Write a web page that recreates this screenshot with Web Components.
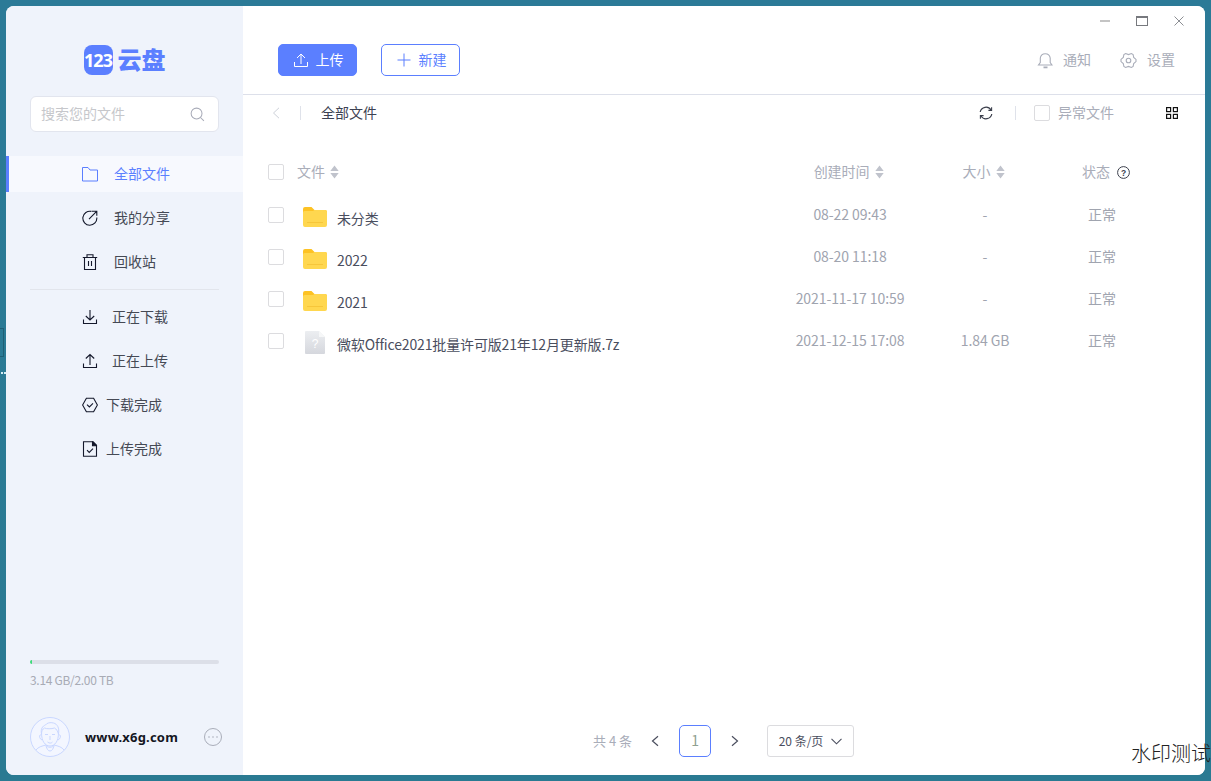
<!DOCTYPE html>
<html lang="zh">
<head>
<meta charset="utf-8">
<title>123云盘</title>
<style>
    html, body { margin: 0; height: 100%; }
    body {
        background: linear-gradient(180deg, #2b7a97, #2a7a92);
        font-family: "Noto Sans CJK SC", "Noto Sans", sans-serif;
        overflow: hidden;
    }
</style>
</head>
<body>
<app-window>
    <side-bar slot="side"></side-bar>
    <file-pane slot="main"></file-pane>
</app-window>

<script>
const icons = {
    folder: `<svg width="16" height="16" viewBox="0 0 16 16" fill="none" stroke="currentColor"><path d="M.5 1.500h5.500l2 2.500h7.500v11H.5z"/></svg>`,
    share: `<svg width="16" height="16" viewBox="0 0 16 16" fill="none" stroke="currentColor" stroke-width="1.100"><path d="M9.500 1.400A7 7 0 1 0 14.800 7.500"/><path d="M7 9.200 14.600 1.400M10 1.200h4.800v4.600"/></svg>`,
    trash: `<svg width="16" height="16" viewBox="0 0 16 16" fill="none" stroke="currentColor" stroke-width="1.100"><path d="M.8 3.500h14.400M2.500 3.500v12h11v-12M5 3.500V.8h6v2.700M6.500 7v5M9.500 7v5"/></svg>`,
    download: `<svg width="16" height="16" viewBox="0 0 16 16" fill="none" stroke="currentColor" stroke-width="1.100"><path d="M1.500 10.500v4h13v-4M8 1v10M3.800 7 8 11l4.200-4"/></svg>`,
    upload: `<svg width="16" height="16" viewBox="0 0 16 16" fill="none" stroke="currentColor" stroke-width="1.100"><path d="M1.500 10.500v4h13v-4M8 12V1.500M3.800 5.500 8 1.500l4.200 4"/></svg>`,
    hexcheck: `<svg width="16" height="16" viewBox="0 0 16 16" fill="none" stroke="currentColor" stroke-width="1.100"><path d="M4.400 1.200h7.200L15.400 8l-3.800 6.800H4.400L.6 8z"/><path d="M5 7.600 7.400 10 11 6.400"/></svg>`,
    filecheck: `<svg width="16" height="16" viewBox="0 0 16 16" fill="none" stroke="currentColor" stroke-width="1.100"><path d="M1.500.8h9l4 4v10.400h-13z"/><path d="M10.500.8h.6l3.400 3.400v.6h-4z" fill="currentColor"/><path d="M5 9.200 7.200 11.400 11 7.600"/></svg>`,
    search: `<svg width="15" height="15" viewBox="0 0 16 16" fill="none" stroke="#a8abb8" stroke-width="1.100"><circle cx="7" cy="7" r="5.800"/><path d="m11.200 11.200 3.600 3.600"/></svg>`,
    sort: `<svg width="9" height="14" viewBox="0 0 9 14" fill="#c0c3cc"><path d="M4.500.5 8.700 6H.3zM.3 8h8.400l-4.200 5.500z"/></svg>`,
    bell: `<svg width="16" height="18" viewBox="0 0 16 18" fill="none" stroke="#a9adb9" stroke-width="1.100"><path d="M1.500 14h13.500l-1.800-2.400V7A5 5 0 0 0 3.300 7v4.600z"/><path d="M6.500 16.400h4" stroke-width="1.600"/></svg>`,
    gear: `<svg width="17" height="17" viewBox="0 0 17 17" fill="none" stroke="#a9adb9" stroke-width="1.100"><path d="M5.600 1.600 8.500 2.600l2.900-1 1.700.9.600 2.900 2.300 2v2.200l-2.300 2-.6 2.900-1.700.9-2.900-1-2.900 1-1.700-.9-.6-2.900-2.300-2V7.400l2.300-2 .6-2.900z"/><circle cx="8.500" cy="8.500" r="2.300"/></svg>`,
    refresh: `<svg width="14" height="14" viewBox="0 0 14 14" fill="none" stroke="#3b3f4c" stroke-width="1.200"><path d="M1.200 6A5.900 5.900 0 0 1 12 4M12.800 8A5.900 5.900 0 0 1 2 10"/><path d="M12.600 1.200V4.400H9.400M1.400 12.800V9.600h3.200" stroke-width="1.100"/></svg>`,
    grid: `<svg width="12" height="12" viewBox="0 0 12 12" fill="none" stroke="#111" stroke-width="1.200"><rect x=".6" y=".6" width="4" height="4"/><rect x="7.400" y=".6" width="4" height="4"/><rect x=".6" y="7.400" width="4" height="4"/><rect x="7.400" y="7.400" width="4" height="4"/></svg>`,
    help: `<svg width="13" height="13" viewBox="0 0 13 13" fill="none" stroke="#3b3f4c"><circle cx="6.500" cy="6.500" r="5.900"/><text x="6.500" y="9.500" text-anchor="middle" font-size="8.500" font-weight="700" fill="#3b3f4c" stroke="none" font-family="Liberation Sans">?</text></svg>`,
    bigfolder: `<svg width="24" height="20" viewBox="0 0 24 20"><path d="M0 2a2 2 0 0 1 2-2h6.500l3 3H22a2 2 0 0 1 2 2v5H0z" fill="#fdc224"/><path d="M0 5.500a1.500 1.500 0 0 1 1.500-1.500H10l1.500-1H22a2 2 0 0 1 2 2v13a2 2 0 0 1-2 2H2a2 2 0 0 1-2-2z" fill="#ffd74f"/><path d="M4 15.500h16" stroke="#f6c63a"/></svg>`,
    bigfile: `<svg width="20" height="23" viewBox="0 0 20 23"><defs><linearGradient id="g" x1="0" y1="0" x2="0" y2="1"><stop offset="0" stop-color="#eceef1"/><stop offset="1" stop-color="#d5d7dd"/></linearGradient></defs><path d="M1 0h13l6 6v16a1 1 0 0 1-1 1H1a1 1 0 0 1-1-1V1a1 1 0 0 1 1-1z" fill="url(#g)"/><path d="M14 0l6 6h-6z" fill="#f6f7f8"/><text x="10" y="17" text-anchor="middle" font-size="12" fill="#fff" font-family="Liberation Sans">?</text></svg>`
}

class appWindow extends HTMLElement {
    constructor() {
        super()
        this.attachShadow({ mode: "open" });
    }

    connectedCallback() {
        this.shadowRoot.innerHTML = /*html*/`
        <style>
            :host {
                display: block;
                height: 100vh;
                box-sizing: border-box;
                padding: 6px;
                position: relative;
            }
            .window {
                display: flex;
                height: 100%;
                border-radius: 8px;
                overflow: hidden;
                background: white;
            }
            .ghost {
                position: absolute;
                left: 0;
                top: 328px;
                width: 3px;
                height: 27px;
                border: 1px solid #1f5f75;
                border-left: 0;
            }
            .dots {
                position: absolute;
                left: 1px;
                top: 372px;
                width: 2px;
                height: 2px;
                background: #d6eef5;
                box-shadow: 3px 0 0 #d6eef5;
            }
            .watermark {
                position: absolute;
                left: 1131px;
                top: 739px;
                font-size: 20px;
                line-height: 28px;
                font-weight: 300;
                color: #222;
                white-space: nowrap;
            }
        </style>
        <div class="ghost"></div>
        <div class="dots"></div>
        <div class="window">
            <slot name="side"></slot>
            <slot name="main"></slot>
        </div>
        <div class="watermark">水印测试</div>
        `
    }
}

class sideBar extends HTMLElement {
    constructor() {
        super()
        this.attachShadow({ mode: "open" });
    }

    connectedCallback() {
        this.shadowRoot.innerHTML = /*html*/`
        <style>
            :host {
                display: flex;
                flex-direction: column;
                flex: none;
                width: 237px;
                box-sizing: border-box;
                padding-bottom: 18px;
                background: #eff3fb;
            }
            .logo {
                display: flex;
                align-items: center;
                justify-content: center;
                gap: 5px;
                height: 30px;
                margin-top: 39px;
            }
            .tile {
                width: 29px;
                height: 30px;
                border-radius: 8px;
                background: #5b7fff;
                color: white;
                font: 700 18px/30px "Noto Sans", sans-serif;
                letter-spacing: -1px;
                text-align: center;
            }
            .brand {
                color: #5b7fff;
                font-size: 24px;
                line-height: 28px;
                padding-bottom: 2px;
                font-weight: 900;
            }
            .search {
                display: flex;
                align-items: center;
                justify-content: space-between;
                height: 36px;
                box-sizing: border-box;
                margin: 21px 24px 24px;
                padding: 0 13px 0 10px;
                background: white;
                border: 1px solid #e2e5ee;
                border-radius: 6px;
                color: #c6c7cb;
                font-size: 14px;
            }
            .search span { padding-bottom: 2px; }
            nav {
                display: flex;
                flex-direction: column;
                gap: 8px;
            }
            hr {
                width: 189px;
                margin: 1px 0 1px 24px;
                border: 0;
                border-top: 1px solid #e2e5ec;
            }
            .storage {
                margin: auto 24px 0;
            }
            .bar {
                height: 4px;
                border-radius: 2px;
                background: #dcdfe8;
                overflow: hidden;
            }
            .bar div {
                width: 2px;
                height: 100%;
                background: #3ddc7a;
            }
            .used {
                margin-top: 7px;
                color: #a8abb5;
                font-size: 12px;
                line-height: 18px;
                letter-spacing: -0.3px;
            }
            .user {
                display: flex;
                align-items: center;
                margin: 28px 21px 0 24px;
            }
            .name {
                flex: 1;
                margin-left: 15px;
                color: #14161f;
                font: 700 13px/20px "Noto Sans", sans-serif;
                letter-spacing: .2px;
            }
            .avatar * { fill: none; stroke: #c9d7ff; stroke-width: 1; }
            .avatar circle { fill: #f3f6ff; }
            svg { display: block; }
        </style>
        <div class="logo">
            <div class="tile">123</div>
            <div class="brand">云盘</div>
        </div>
        <div class="search">
            <span>搜索您的文件</span>
            ${icons.search}
        </div>
        <nav>
            <nav-item icon="folder" gap="16" active>全部文件</nav-item>
            <nav-item icon="share" gap="16">我的分享</nav-item>
            <nav-item icon="trash" gap="16">回收站</nav-item>
            <hr>
            <nav-item icon="download" gap="14">正在下载</nav-item>
            <nav-item icon="upload" gap="14">正在上传</nav-item>
            <nav-item icon="hexcheck" gap="8">下载完成</nav-item>
            <nav-item icon="filecheck" gap="8">上传完成</nav-item>
        </nav>
        <div class="storage">
            <div class="bar"><div></div></div>
            <div class="used">3.14 GB/2.00 TB</div>
        </div>
        <div class="user">
            <svg class="avatar" width="40" height="40" viewBox="0 0 40 40">
                <circle cx="20" cy="20" r="19.500"/>
                <path d="M11.500 16c0 8 3.500 13 8.500 13s8.500-5 8.500-13"/>
                <path d="M11.500 17c-1-5 1-8 4-9 1-2 5-3 8-2 4 1 6 5 5 11-1-3-2-5-4-6-3 1-8 1-10 0-2 1-3 3-3 6z"/>
                <path d="M11 18c-2-1-2 4 1 5M29 18c2-1 2 4-1 5M15 17.500h3M22 17.500h3M20 19v4M17.500 25c2 1.500 3.500 1.500 5 0"/>
                <path d="M6 33c2-3 6-4 10-5 1 3 7 3 8 0 4 1 8 2 10 5M16 29c1 3 2 5 4 5s3-2 4-5"/>
            </svg>
            <div class="name">www.x6g.com</div>
            <svg width="18" height="18" viewBox="0 0 18 18" fill="#a9adb9" stroke="none">
                <circle cx="9" cy="9" r="8.500" fill="none" stroke="#a9adb9"/>
                <circle cx="5" cy="9" r=".8"/><circle cx="9" cy="9" r=".8"/><circle cx="13" cy="9" r=".8"/>
            </svg>
        </div>
        `
    }
}

class navItem extends HTMLElement {
    constructor() {
        super()
        this.attachShadow({ mode: "open" });
    }

    connectedCallback() {
        const gap = this.getAttribute('gap')
        this.shadowRoot.innerHTML = /*html*/`
        <style>
            :host {
                display: flex;
                align-items: center;
                height: 36px;
                box-sizing: border-box;
                padding-left: 76px;
                gap: ${gap}px;
                color: #454954;
                font-size: 14px;
            }
            :host([active]) {
                padding-left: 73px;
                border-left: 3px solid #5b7fff;
                background: #f7f9fe;
                color: #5b7fff;
            }
            .icon { color: #14182b; display: flex; }
            :host([active]) .icon { color: #5b7fff; }
            .text { padding-bottom: 2px; }
            svg { display: block; }
        </style>
        <span class="icon">${icons[this.getAttribute('icon')]}</span>
        <span class="text"><slot></slot></span>
        `
    }
}

class filePane extends HTMLElement {
    constructor() {
        super()
        this.attachShadow({ mode: "open" });
    }

    connectedCallback() {
        this.shadowRoot.innerHTML = /*html*/`
        <style>
            :host {
                display: flex;
                flex-direction: column;
                flex: 1;
                min-width: 0;
                height: 100%;
                background: white;
            }
            .list {
                margin-top: 20px;
                padding: 0 27px 0 25px;
            }
            pager-bar { margin-top: auto; }
        </style>
        <title-bar></title-bar>
        <tool-bar></tool-bar>
        <crumb-bar></crumb-bar>
        <div class="list">
            <list-head></list-head>
            <file-row kind="folder" name="未分类" date="08-22 09:43" size="-"></file-row>
            <file-row kind="folder" name="2022" date="08-20 11:18" size="-"></file-row>
            <file-row kind="folder" name="2021" date="2021-11-17 10:59" size="-"></file-row>
            <file-row kind="file" name="微软Office2021批量许可版21年12月更新版.7z" date="2021-12-15 17:08" size="1.84 GB"></file-row>
        </div>
        <pager-bar></pager-bar>
        `
    }
}

class titleBar extends HTMLElement {
    constructor() {
        super()
        this.attachShadow({ mode: "open" });
    }

    connectedCallback() {
        this.shadowRoot.innerHTML = /*html*/`
        <style>
            :host {
                display: flex;
                justify-content: flex-end;
                align-items: center;
                gap: 26px;
                height: 30px;
                padding-right: 21px;
                box-sizing: border-box;
            }
            svg { display: block; }
        </style>
        <svg width="10" height="12" viewBox="0 0 10 12"><path d="M0 6h10" stroke="#c4c4c4" stroke-width="2"/></svg>
        <svg width="12" height="12" viewBox="0 0 12 12" fill="none" stroke="#77797e"><rect x=".5" y="1.500" width="11" height="9"/><path d="M0 2h12" stroke-width="2"/></svg>
        <svg width="10" height="12" viewBox="0 0 10 12" fill="none" stroke="#8c8e93"><path d="m.5 1.500 9 9M9.500 1.500l-9 9"/></svg>
        `
    }
}

class toolBar extends HTMLElement {
    constructor() {
        super()
        this.attachShadow({ mode: "open" });
    }

    connectedCallback() {
        this.shadowRoot.innerHTML = /*html*/`
        <style>
            :host {
                display: flex;
                align-items: center;
                height: 59px;
                box-sizing: border-box;
                padding: 0 30px 10px 35px;
                gap: 24px;
                border-bottom: 1px solid #dde0ea;
                font-size: 14px;
            }
            button {
                display: flex;
                align-items: center;
                justify-content: center;
                gap: 8px;
                width: 79px;
                height: 32px;
                padding: 0 0 0 2px;
                border: 1px solid #5b7fff;
                border-radius: 5px;
                font: inherit;
                line-height: 20px;
            }
            button span, .link span { padding-bottom: 2px; }
            .up { background: #5b7fff; color: white; }
            .new { background: white; color: #5b7fff; }
            .grow { flex: 1; }
            .link {
                display: flex;
                align-items: center;
                gap: 10px;
                color: #a9adb9;
                font-size: 14px;
            }
            .link + .link { margin-left: 5px; }
            svg { display: block; }
        </style>
        <button class="up">
            <svg width="14" height="14" viewBox="0 0 14 14" fill="none" stroke="currentColor"><path d="M.5 9v4.500h13V9M7 11V1M3 5l4-4 4 4"/></svg>
            <span>上传</span>
        </button>
        <button class="new">
            <svg width="14" height="14" viewBox="0 0 14 14" fill="none" stroke="currentColor"><path d="M7 .5v13M.5 7h13"/></svg>
            <span>新建</span>
        </button>
        <div class="grow"></div>
        <div class="link">${icons.bell}<span>通知</span></div>
        <div class="link">${icons.gear}<span>设置</span></div>
        `
    }
}

class crumbBar extends HTMLElement {
    constructor() {
        super()
        this.attachShadow({ mode: "open" });
    }

    connectedCallback() {
        this.shadowRoot.innerHTML = /*html*/`
        <style>
            :host {
                display: flex;
                align-items: center;
                height: 36px;
                padding: 0 27px 0 29px;
                font-size: 14px;
                color: #3d4252;
            }
            span { padding-bottom: 2px; }
            .sep {
                width: 1px;
                height: 14px;
                background: #dfe2ea;
            }
            .first { margin: 0 20px; }
            .second { margin: 0 18px 0 22px; }
            .grow { flex: 1; }
            .extra { margin-left: 8px; color: #a9adb9; }
            .view { margin-left: 52px; }
            check-box { flex: none; }
            svg { display: block; }
        </style>
        <svg width="8" height="12" viewBox="0 0 8 12" fill="none" stroke="#ccd0d8"><path d="M7 .8 1.500 6 7 11.200"/></svg>
        <div class="sep first"></div>
        <span>全部文件</span>
        <div class="grow"></div>
        ${icons.refresh}
        <div class="sep second"></div>
        <check-box></check-box>
        <span class="extra">异常文件</span>
        <div class="view">${icons.grid}</div>
        `
    }
}

class checkBox extends HTMLElement {
    constructor() {
        super()
        this.attachShadow({ mode: "open" });
    }

    connectedCallback() {
        this.shadowRoot.innerHTML = /*html*/`
        <style>
            :host {
                display: block;
                width: 16px;
                height: 16px;
                box-sizing: border-box;
                border: 1px solid #dcdcdf;
                border-radius: 2px;
                background: white;
            }
        </style>
        `
    }
}

const columnStyles = /*css*/`
    :host {
        display: grid;
        grid-template-columns: 29px 6px 1fr 188px 82px 152px;
        align-items: center;
        height: 42px;
        box-sizing: border-box;
        font-size: 14px;
    }
    .cell {
        display: flex;
        align-items: center;
        justify-content: center;
        gap: 5px;
    }
    .cell span { padding-bottom: 2px; letter-spacing: -0.08px; }
    svg { display: block; }
`

class listHead extends HTMLElement {
    constructor() {
        super()
        this.attachShadow({ mode: "open" });
    }

    connectedCallback() {
        this.shadowRoot.innerHTML = /*html*/`
        <style>
            ${columnStyles}
            :host { color: #a9adb9; height: 43px; padding-bottom: 1px; }
            .file { grid-column: 2 / 4; justify-content: flex-start; }
            .sized { padding-right: 2px; gap: 6px; }
            .state { padding-left: 8px; gap: 7px; }
        </style>
        <check-box></check-box>
        <div class="cell file"><span>文件</span>${icons.sort}</div>
        <div class="cell sized"><span>创建时间</span>${icons.sort}</div>
        <div class="cell sized"><span>大小</span>${icons.sort}</div>
        <div class="cell state"><span>状态</span>${icons.help}</div>
        `
    }
}

class fileRow extends HTMLElement {
    constructor() {
        super()
        this.attachShadow({ mode: "open" });
        this.name = this.getAttribute('name')
        this.date = this.getAttribute('date')
        this.size = this.getAttribute('size')
        this.kind = this.getAttribute('kind')
    }

    connectedCallback() {
        const folder = this.kind === 'folder'
        this.shadowRoot.innerHTML = /*html*/`
        <style>
            ${columnStyles}
            :host { color: #a0a4af; }
            .name {
                grid-column: 2 / 4;
                display: flex;
                align-items: center;
                color: #4a4e5e;
                padding-left: 6px;
            }
            .glyph {
                display: flex;
                justify-content: center;
                width: 24px;
                margin-right: 10px;
                padding-top: ${folder ? 4 : 3}px;
            }
            .label {
                padding-top: 6px;
                white-space: nowrap;
                letter-spacing: -0.14px;
            }
        </style>
        <check-box></check-box>
        <div class="name"><span class="glyph">${folder ? icons.bigfolder : icons.bigfile}</span><span class="label">${this.name}</span></div>
        <div class="cell"><span>${this.date}</span></div>
        <div class="cell"><span>${this.size}</span></div>
        <div class="cell"><span>正常</span></div>
        `
    }
}

class pagerBar extends HTMLElement {
    constructor() {
        super()
        this.attachShadow({ mode: "open" });
    }

    connectedCallback() {
        this.shadowRoot.innerHTML = /*html*/`
        <style>
            :host {
                display: flex;
                align-items: center;
                justify-content: center;
                height: 32px;
                margin-bottom: 18px;
                font-size: 13px;
                color: #a9adb9;
                padding-right: 1px;
            }
            span { padding-bottom: 2px; }
            .prev { margin: 0 20px 0 19px; }
            .page {
                width: 32px;
                height: 32px;
                box-sizing: border-box;
                border: 1px solid #5b7fff;
                border-radius: 5px;
                font-size: 14px;
                line-height: 28px;
                text-align: center;
                color: #8fa090;
            }
            .next { margin: 0 28px 0 20px; }
            .select {
                display: flex;
                align-items: center;
                justify-content: center;
                gap: 8px;
                width: 87px;
                height: 32px;
                box-sizing: border-box;
                border: 1px solid #dcdcdf;
                border-radius: 3px;
                color: #4a4e5e;
                font-size: 12px;
            }
            svg { display: block; }
        </style>
        <span>共 4 条</span>
        <svg class="prev" width="8" height="12" viewBox="0 0 8 12" fill="none" stroke="#4a4e5e" stroke-width="1.200"><path d="M7 1.200 1.500 6 7 10.800"/></svg>
        <div class="page">1</div>
        <svg class="next" width="8" height="12" viewBox="0 0 8 12" fill="none" stroke="#4a4e5e" stroke-width="1.200"><path d="M1 1.200 6.500 6 1 10.800"/></svg>
        <div class="select">
            <span>20 条/页</span>
            <svg width="11" height="7" viewBox="0 0 11 7" fill="none" stroke="#4a4e5e" stroke-width="1.100"><path d="m.5.800 5 5 5-5"/></svg>
        </div>
        `
    }
}

customElements.define("app-window", appWindow);
customElements.define("side-bar", sideBar);
customElements.define("nav-item", navItem);
customElements.define("file-pane", filePane);
customElements.define("title-bar", titleBar);
customElements.define("tool-bar", toolBar);
customElements.define("crumb-bar", crumbBar);
customElements.define("check-box", checkBox);
customElements.define("list-head", listHead);
customElements.define("file-row", fileRow);
customElements.define("pager-bar", pagerBar);
</script>
</body>
</html>
